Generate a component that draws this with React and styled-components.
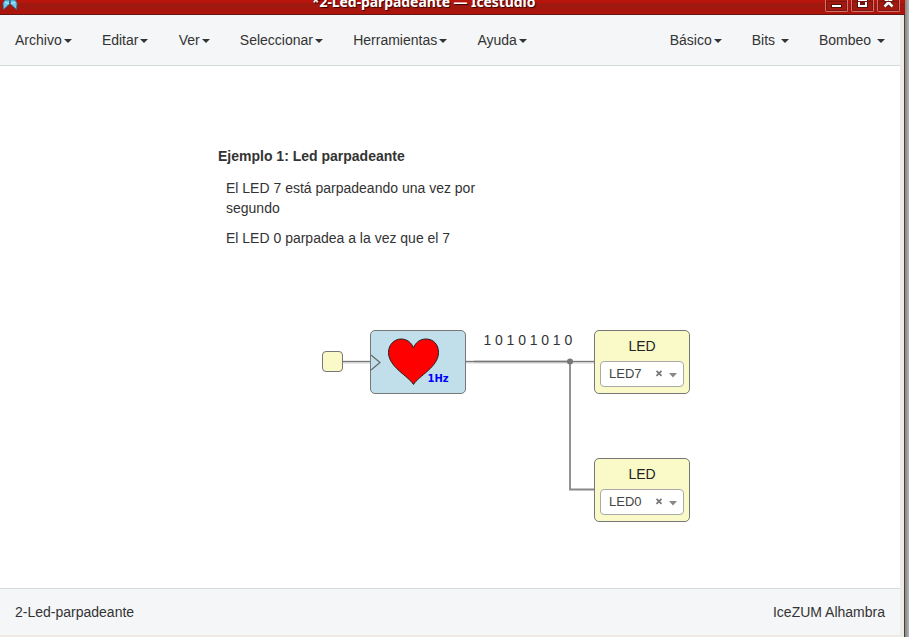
import React from 'react';
import styled, { createGlobalStyle } from 'styled-components';

const GlobalStyle = createGlobalStyle`
  * { box-sizing: border-box; }
  body {
    margin: 0;
    overflow: hidden;
    background: #fff;
    color: #333;
    font: 14px/20px "Liberation Sans", Arial, sans-serif;
  }
`;

const Desktop = styled.div`
  display: flex;
  width: 909px;
  height: 637px;
  overflow: hidden;
  background: linear-gradient(90deg, #858585 905px, #b4b4b4 909px);
`;

const Window = styled.div`
  display: flex;
  flex-direction: column;
  width: 905px;
  height: 637px;
  border-right: 1px solid #45403c;
`;

const TitleBar = styled.header`
  display: grid;
  grid-template-columns: 24px 1fr auto;
  flex: none;
  height: 15px;
  width: 905px;
  overflow: hidden;
  border-bottom: 1px solid #5e1714;
  background: linear-gradient(#bb150c 0, #b3150c 3px, #9c1a11 4px, #a5160d 9px, #b2130a 14px);
`;

const Logo = styled.svg`
  display: block;
  width: 18px;
  height: 12px;
  margin-left: 1px;
`;

const Title = styled.h1`
  margin: -8px 0 0 288px;
  color: #fff;
  font: 700 14px/20px "Noto Sans", "Open Sans", sans-serif;
  letter-spacing: -0.08px;
  white-space: nowrap;
  text-shadow: 1px 1px 1px #300;
`;

const Controls = styled.div`
  display: flex;
  gap: 3px;
  padding-right: 5px;
`;

const Control = styled.button`
  display: block;
  width: 23px;
  height: 12px;
  padding: 0;
  border: 1px solid #d2746d;
  border-top: 0;
  border-radius: 0 0 2px 2px;
  outline: 1px solid #7d1510;
  outline-offset: -2px;
  background: #a3180f;
  svg { display: block; }
`;

const Body = styled.div`
  display: flex;
  flex-direction: column;
  flex: 1;
  width: 904px;
  border-right: 4px solid #eeeae4;
  border-bottom: 2px solid #eeeae4;
  background: #fff;
`;

const MenuBar = styled.nav`
  display: flex;
  justify-content: space-between;
  flex: none;
  height: 51px;
  border-bottom: 1px solid #d3dbdb;
  background: #f5f6f8;
`;

const MenuGroup = styled.div`
  display: flex;
`;

const MenuItem = styled.a`
  padding: 15px ${(p) => (p.$wide ? 15.2 : 15)}px 15px 15px;
  color: #333;
  white-space: pre;
`;

const Caret = styled.span`
  display: inline-block;
  margin-left: 2px;
  vertical-align: middle;
  border-top: 4px solid #333;
  border-right: 4px solid transparent;
  border-left: 4px solid transparent;
`;

const Canvas = styled.main`
  position: relative;
  flex: 1;
`;

const Note = styled.section`
  position: absolute;
  left: 218px;
  top: 80px;
  width: 272px;
`;

const NoteTitle = styled.h2`
  margin: 0 0 12px;
  font-size: 14px;
  line-height: 20px;
`;

const NoteText = styled.p`
  margin: 0 0 10px 8px;
`;

const Wires = styled.svg`
  position: absolute;
  left: 318px;
  top: 254px;
`;

const Bitstream = styled.div`
  position: absolute;
  left: 483.5px;
  top: 264px;
  letter-spacing: -0.06px;
  white-space: pre;
`;

const Block = styled.div`
  position: absolute;
  left: ${(p) => p.$x}px;
  top: ${(p) => p.$y}px;
  width: ${(p) => p.$w || 96}px;
  height: ${(p) => p.$h || 64}px;
  border: 1px solid #777;
  border-radius: ${(p) => p.$r || 5}px;
  background: ${(p) => p.$fill || '#fafac8'};
`;

const BlockLabel = styled.div`
  padding-top: 5px;
  color: #222;
  text-align: center;
`;

const Select = styled.div`
  display: flex;
  align-items: center;
  width: 84px;
  height: 26px;
  margin: 5px 0 0 5px;
  padding: 0 6px 0 8px;
  border: 1px solid #aaa;
  border-radius: 4px;
  background: #fff;
  color: #444;
  font-size: 13px;
`;

const SelectValue = styled.span`
  flex: 1;
  padding-bottom: 1px;
`;

const Icon = styled.svg`
  display: block;
`;

const StatusBar = styled.footer`
  display: flex;
  justify-content: space-between;
  flex: none;
  height: 47px;
  padding: 13px 15px;
  border-top: 1px solid #d3dbdb;
  background: #f5f6f8;
`;

function Menu({ items, wide }) {
  return (
    <MenuGroup>
      {items.map((label) => (
        <MenuItem key={label} $wide={wide}>{label}<Caret /></MenuItem>
      ))}
    </MenuGroup>
  );
}

function LedBlock({ y, pin }) {
  return (
    <Block $x={594} $y={y}>
      <BlockLabel>LED</BlockLabel>
      <Select>
        <SelectValue>{pin}</SelectValue>
        <Icon width="22" height="10" viewBox="0 0 22 10">
          <path d="M1.5 1.8l5 5M6.5 1.8l-5 5" stroke="#777" strokeWidth="1.7" />
          <path d="M14 4h8l-4 4.5z" fill="#888" />
        </Icon>
      </Select>
    </Block>
  );
}

export default function App() {
  return (
    <Desktop>
      <GlobalStyle />
      <Window>
        <TitleBar>
          <Logo viewBox="0 0 18 12">
            <path d="M4 0h4.5v4L2.5 9.5 2 3z" fill="#70c8ee" stroke="#28738d" strokeWidth=".8" />
            <path d="M9.500 0H14l2 3-.5 6.500L9.500 4z" fill="#70c8ee" stroke="#28738d" strokeWidth=".8" />
            <path d="M4 2.500l4 1M14 2.500l-4 1" stroke="#b9edff" />
          </Logo>
          <Title>*2-Led-parpadeante — Icestudio</Title>
          <Controls>
            <Control aria-label="Minimizar">
              <svg width="21" height="11"><path d="M5 4h11v4H5z" fill="#501410" /><path d="M6 5h9v2H6z" fill="#fff" /></svg>
            </Control>
            <Control aria-label="Maximizar">
              <svg width="21" height="11"><path d="M5 0h11v8H5z" fill="#501410" /><path d="M6 0h9v7H6z" fill="#fff" /><path d="M8 1h5v4H8z" fill="#70150f" /></svg>
            </Control>
            <Control aria-label="Cerrar">
              <svg width="21" height="11"><path d="M6.500-1.500l8 8M14.500-1.500l-8 8" stroke="#501410" strokeWidth="4.500" /><path d="M6.500-1.500l8 8M14.500-1.500l-8 8" stroke="#fff" strokeWidth="2.600" /></svg>
            </Control>
          </Controls>
        </TitleBar>
        <Body>
          <MenuBar>
            <Menu wide items={['Archivo', 'Editar', 'Ver', 'Seleccionar', 'Herramientas', 'Ayuda']} />
            <Menu items={['Básico', 'Bits ', 'Bombeo ']} />
          </MenuBar>
          <Canvas>
            <Note>
              <NoteTitle>Ejemplo 1: Led parpadeante</NoteTitle>
              <NoteText>El LED 7 está parpadeando una vez por segundo</NoteText>
              <NoteText>El LED 0 parpadea a la vez que el 7</NoteText>
            </Note>
            <Wires width="280" height="180" fill="none">
              <path d="M24 42h30M146 42h132" stroke="#d4d4d4" strokeWidth="3" />
              <path d="M24 41.5h30M146 41.5h132" stroke="#777" />
              <path d="M156 41.5h96" stroke="#777" strokeWidth="1.6" />
              <path d="M252 41.5v128h26" stroke="#888" strokeWidth="1.8" />
              <circle cx="252" cy="41.5" r="3" fill="#777" />
            </Wires>
            <Bitstream>1 0 1 0 1 0 1 0</Bitstream>
            <Block $x={321.5} $y={285} $w={21} $h={21} $r={4} />
            <Block $x={370} $y={264} $fill="#c0dfeb">
              <Icon width="94" height="62">
                <path d="M0 24l9 7.500L0 39" fill="none" stroke="#666" strokeWidth="1.200" />
                <path d="M42.500 53.500C37.500 45 17.500 36 17.500 21.500c0-8 6-13.500 12.500-13.500 6 0 10.500 3.500 12.500 9 2-5.500 6.500-9 12.500-9 7.500 0 12.500 5.500 12.500 13.500C67.500 36 47.500 45 42.500 53.500z" fill="#f00" stroke="#222" />
                <text x="56.500" y="51" fill="#00f" fontFamily="DejaVu Sans, sans-serif" fontSize="10" fontWeight="700">1Hz</text>
              </Icon>
            </Block>
            <LedBlock y={264} pin="LED7" />
            <LedBlock y={392} pin="LED0" />
          </Canvas>
          <StatusBar><span>2-Led-parpadeante</span><span>IceZUM Alhambra</span></StatusBar>
        </Body>
      </Window>
    </Desktop>
  );
}
